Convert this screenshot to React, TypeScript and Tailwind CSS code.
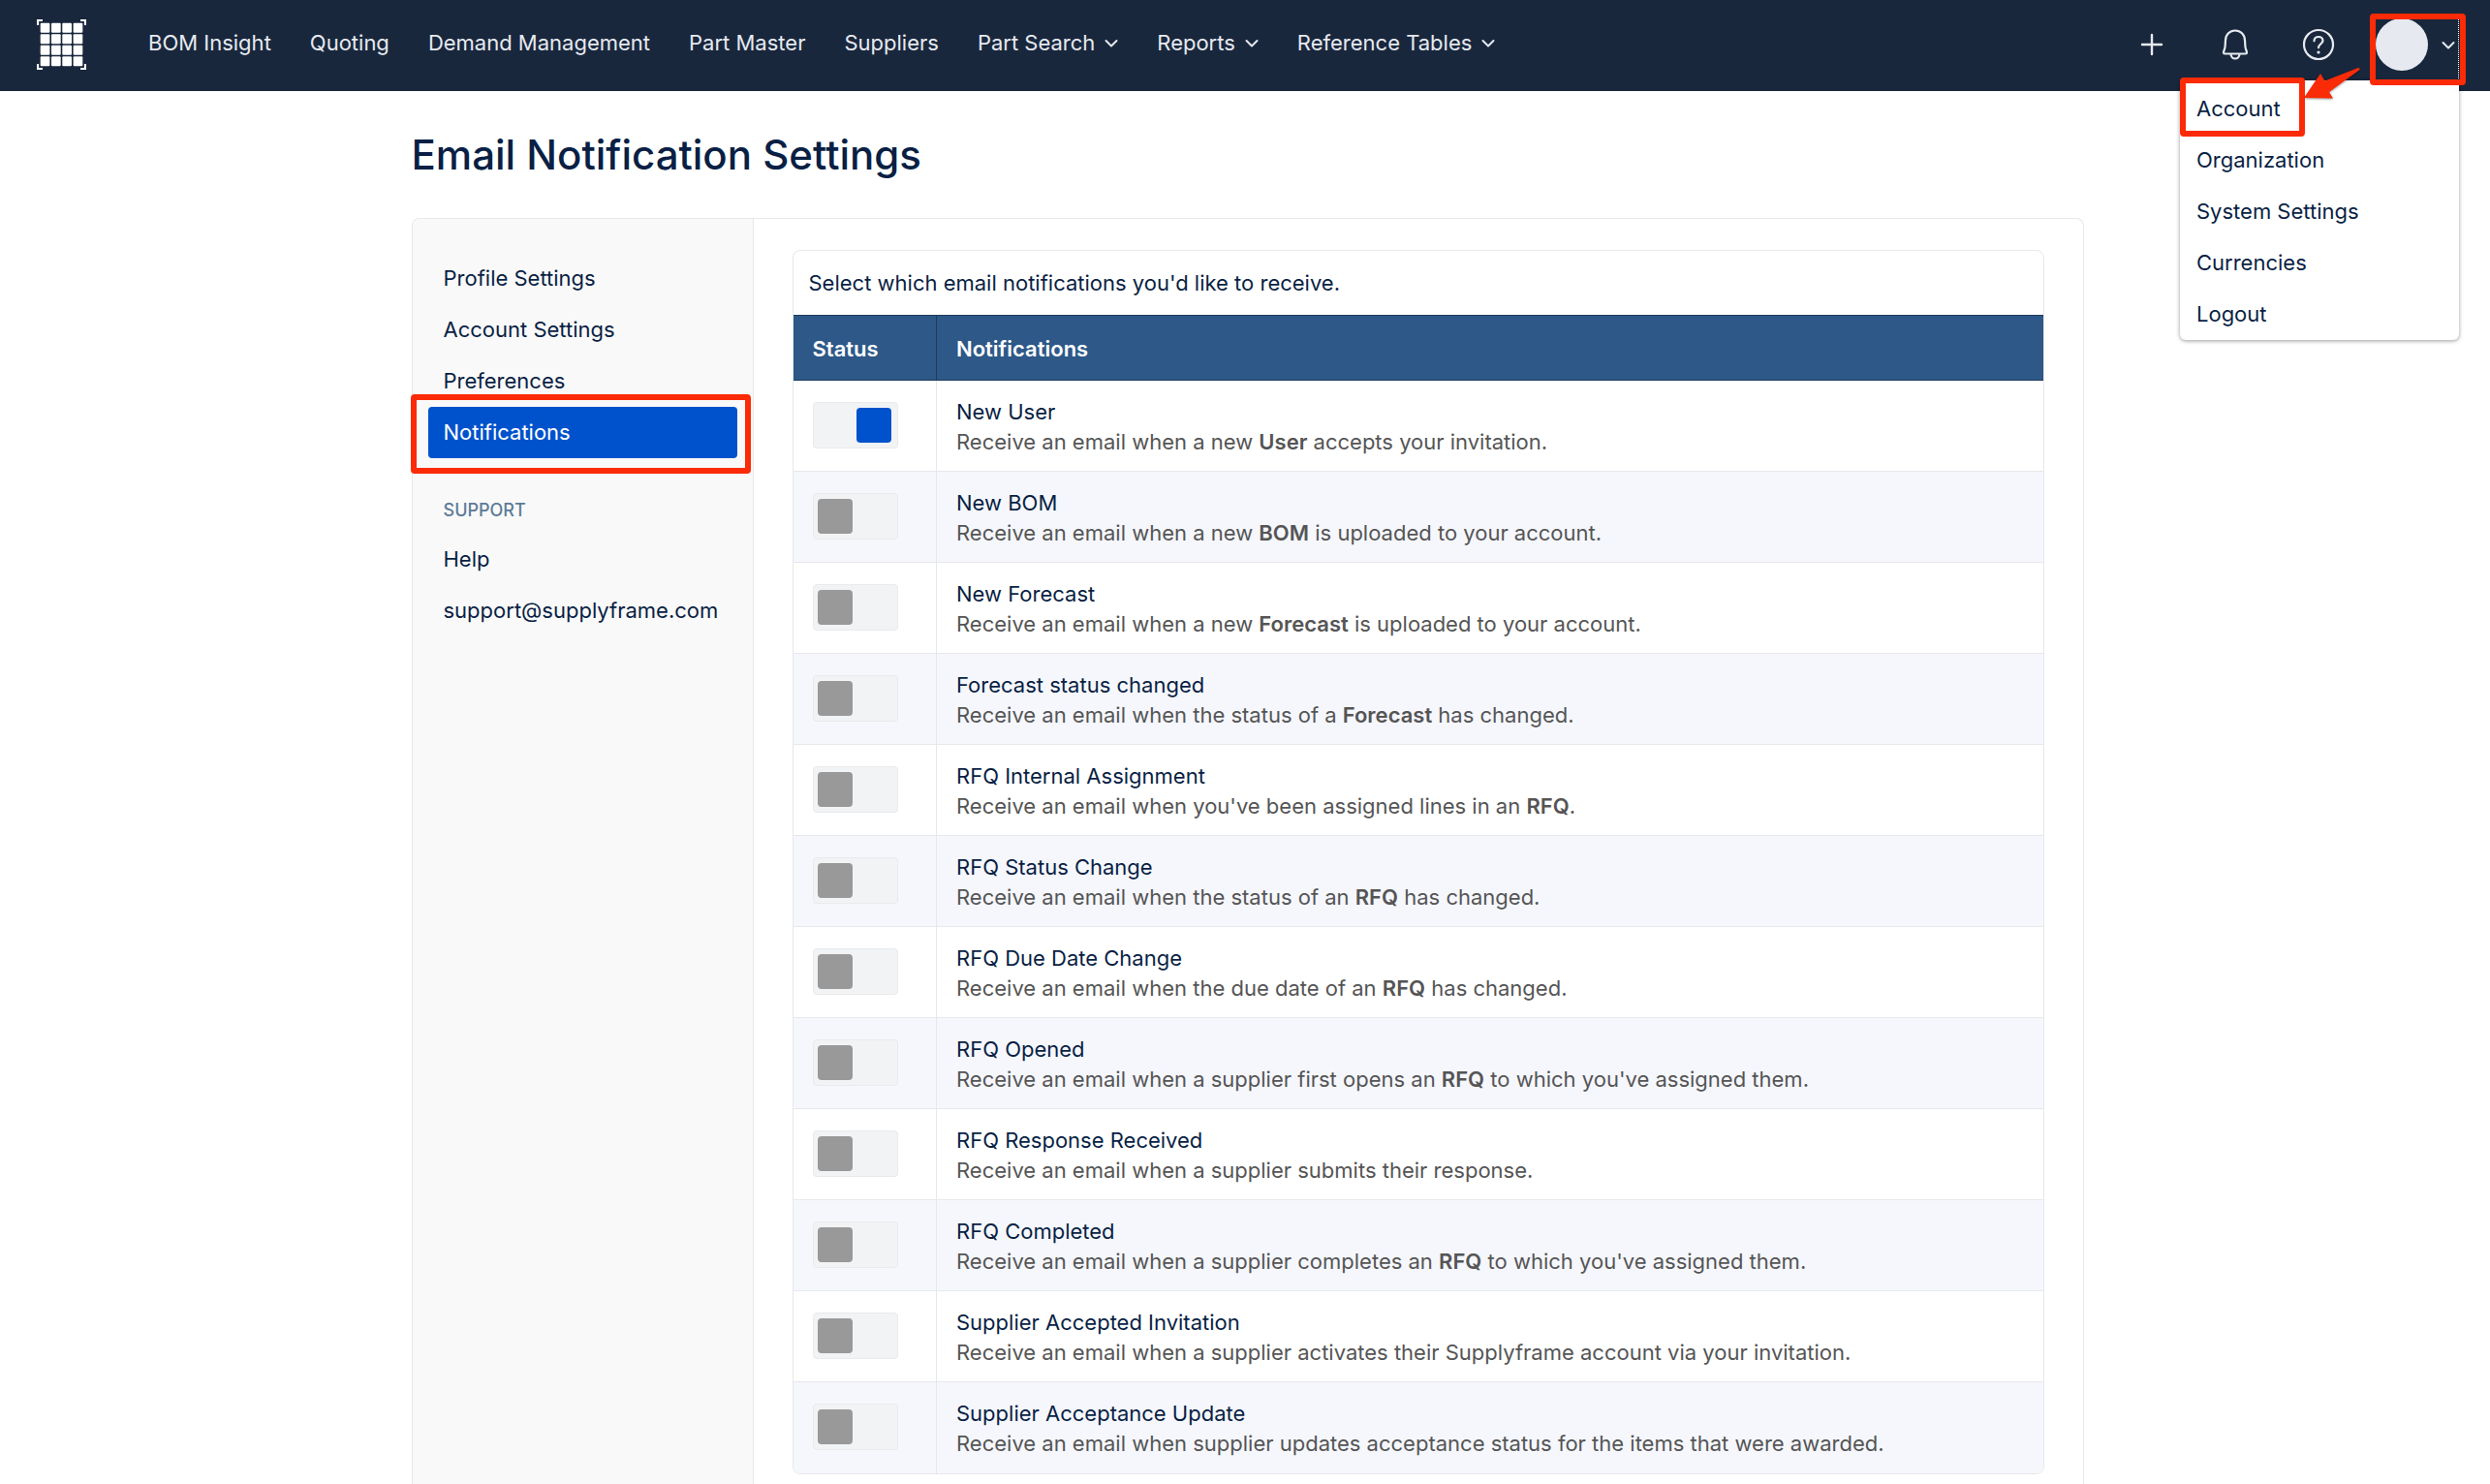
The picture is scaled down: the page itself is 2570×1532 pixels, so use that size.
import { useState } from 'react'
import type { ReactNode } from 'react'
import { clsx } from 'clsx'

const NAV_ITEMS = [
  { label: 'BOM Insight' },
  { label: 'Quoting' },
  { label: 'Demand Management' },
  { label: 'Part Master' },
  { label: 'Suppliers' },
  { label: 'Part Search', menu: true },
  { label: 'Reports', menu: true },
  { label: 'Reference Tables', menu: true },
]

const ACCOUNT_MENU = ['Account', 'Organization', 'System Settings', 'Currencies', 'Logout']

const SETTINGS_LINKS = ['Profile Settings', 'Account Settings', 'Preferences', 'Notifications']

const SUPPORT_LINKS = [
  { label: 'Help', href: '#help' },
  { label: 'support@supplyframe.com', href: 'mailto:support@supplyframe.com' },
]

type Notification = { id: string; title: string; text: ReactNode }

const NOTIFICATIONS: Notification[] = [
  { id: 'new-user', title: 'New User', text: <>Receive an email when a new <b>User</b> accepts your invitation.</> },
  { id: 'new-bom', title: 'New BOM', text: <>Receive an email when a new <b>BOM</b> is uploaded to your account.</> },
  { id: 'new-forecast', title: 'New Forecast', text: <>Receive an email when a new <b>Forecast</b> is uploaded to your account.</> },
  { id: 'forecast-status', title: 'Forecast status changed', text: <>Receive an email when the status of a <b>Forecast</b> has changed.</> },
  { id: 'rfq-assignment', title: 'RFQ Internal Assignment', text: <>Receive an email when you've been assigned lines in an <b>RFQ</b>.</> },
  { id: 'rfq-status', title: 'RFQ Status Change', text: <>Receive an email when the status of an <b>RFQ</b> has changed.</> },
  { id: 'rfq-due-date', title: 'RFQ Due Date Change', text: <>Receive an email when the due date of an <b>RFQ</b> has changed.</> },
  { id: 'rfq-opened', title: 'RFQ Opened', text: <>Receive an email when a supplier first opens an <b>RFQ</b> to which you've assigned them.</> },
  { id: 'rfq-response', title: 'RFQ Response Received', text: <>Receive an email when a supplier submits their response.</> },
  { id: 'rfq-completed', title: 'RFQ Completed', text: <>Receive an email when a supplier completes an <b>RFQ</b> to which you've assigned them.</> },
  { id: 'supplier-accepted', title: 'Supplier Accepted Invitation', text: <>Receive an email when a supplier activates their Supplyframe account via your invitation.</> },
  { id: 'supplier-update', title: 'Supplier Acceptance Update', text: <>Receive an email when supplier updates acceptance status for the items that were awarded.</> },
]

function Logo() {
  const cells = [0, 1, 2, 3]
  return (
    <svg width="51" height="52" viewBox="0 0 51 52" fill="none">
      <path d="M1 6V1H6M45 1h5V6M50 46v5H45M6 51H1V46" stroke="#fff" strokeWidth="2.2" />
      {cells.map((row) =>
        cells.map((col) => (
          <rect key={`${row}-${col}`} x={3.7 + col * 11.3} y={3.8 + row * 11.5} width="9.7" height="9.9" rx="1" fill="#fff" />
        )),
      )}
    </svg>
  )
}

function Chevron() {
  return (
    <svg width="14" height="14" viewBox="0 0 14 14" fill="none" stroke="currentColor" strokeWidth="2" strokeLinecap="round" strokeLinejoin="round">
      <path d="M1.500 5L7 10.500L12.500 5" />
    </svg>
  )
}

function Frame({ className }: { className: string }) {
  return <span className={clsx('absolute pointer-events-none border-6 border-[#fb2b07] rounded-sm', className)} />
}

function TopBar() {
  return (
    <header className="relative z-10 h-[94px] bg-[#19273d] text-[#e6eaf0] pl-[38px] pr-8 pb-0.5 flex items-center justify-between">
      <div className="flex items-center gap-16">
        <a href="#home" aria-label="Home">
          <Logo />
        </a>
        <nav className="flex items-center gap-10 pb-1">
          {NAV_ITEMS.map((item) =>
            item.menu ? (
              <button key={item.label} className="flex items-center gap-2.5 whitespace-nowrap">
                {item.label}
                <Chevron />
              </button>
            ) : (
              <a key={item.label} href="#nav" className="whitespace-nowrap">
                {item.label}
              </a>
            ),
          )}
        </nav>
      </div>

      <div className="flex items-center">
        <button aria-label="Add" className="w-[86px] flex justify-center">
          <svg width="24" height="24" viewBox="0 0 24 24" fill="none" stroke="currentColor" strokeWidth="2.4" strokeLinecap="round">
            <path d="M12 2v20M2 12h20" />
          </svg>
        </button>
        <button aria-label="Alerts" className="w-[86px] flex justify-center">
          <svg width="28" height="34" viewBox="0 0 28 34" fill="none" stroke="currentColor" strokeWidth="2.2" strokeLinecap="round" strokeLinejoin="round">
            <path d="M14 2.5C8.5 2.5 4.2 6.7 4 12.500L3.600 19C3.400 21.500 2 23.500 2 25.200C2 26 2.500 26.500 3.300 26.500H24.700C25.500 26.500 26 26 26 25.200C26 23.500 24.600 21.500 24.400 19L24 12.500C23.800 6.700 19.500 2.500 14 2.500Z" />
            <path d="M9.500 27C9.800 29.700 11.500 31.500 14 31.500S18.200 29.700 18.500 27" />
          </svg>
        </button>
        <button aria-label="Help" className="w-[86px] flex justify-center">
          <svg width="34" height="34" viewBox="0 0 34 34" fill="none" stroke="currentColor" strokeWidth="2.2" strokeLinecap="round" strokeLinejoin="round">
            <circle cx="17" cy="17" r="15" />
            <path d="M12.500 13.300C12.500 10.700 14.500 9 17 9C19.600 9 21.500 10.700 21.500 13.100C21.500 16.200 17 16.400 17 20.200" />
            <circle cx="17" cy="25" r="1.600" fill="currentColor" stroke="none" />
          </svg>
        </button>
        <button aria-label="Account menu" className="relative z-10 ml-4 h-[54px] flex items-center gap-3.5 pr-1">
          <span className="size-[54px] rounded-full bg-[#e6eaf0]" />
          <Chevron />
          <span className="absolute right-0 -top-1 -bottom-2 border-r border-dotted border-white" />
          <Frame className="-left-[6px] -right-[7px] -top-[5px] -bottom-[15px]" />
        </button>
      </div>

      <ul className="absolute right-8 top-[83px] w-72 bg-white text-[#0a1f44] rounded-b-md shadow-[0_1px_4px_rgba(0,0,0,0.4)] pt-[3px]">
        {ACCOUNT_MENU.map((label) => (
          <li key={label}>
            <a href="#account" className="block h-[53px] leading-[53px] px-[17px]">
              {label}
            </a>
          </li>
        ))}
        <li aria-hidden="true">
          <Frame className="left-0 -top-[3px] w-[129px] h-[61px]" />
          <svg className="absolute left-32 -top-[14px] drop-shadow-[0_1px_1px_rgba(0,0,0,0.4)]" width="60" height="36" viewBox="0 0 60 36" fill="#fb2b07">
            <path d="M0 32L17 7L21.500 14.500L56 1Q58 1 57.500 3L26 26L30 32.500Z" />
          </svg>
        </li>
      </ul>
    </header>
  )
}

function Sidebar() {
  return (
    <aside className="w-[352px] shrink-0 bg-[#f9f9f9] border-r border-[#e7e8ea] rounded-tl-lg px-4 pt-[35px]">
      <ul>
        {SETTINGS_LINKS.map((label) => {
          const active = label === 'Notifications'
          return (
            <li key={label} className="relative">
              <a
                href="#settings"
                className={clsx('block h-[53px] leading-[53px] px-4 rounded-sm', active && 'bg-[#0052cc] text-white')}
              >
                {label}
              </a>
              {active && <Frame className="-left-[18px] -right-[14px] -top-[13px] -bottom-4" />}
            </li>
          )
        })}
      </ul>
      <h2 className="mt-10 px-4 text-lg leading-7 font-medium text-[#5d7b98]">SUPPORT</h2>
      <ul className="mt-2.5">
        {SUPPORT_LINKS.map((link) => (
          <li key={link.label}>
            <a href={link.href} className="block h-[53px] leading-[53px] px-4">
              {link.label}
            </a>
          </li>
        ))}
      </ul>
    </aside>
  )
}

function NotificationTable() {
  const [enabled, setEnabled] = useState<Record<string, boolean>>({ 'new-user': true })

  return (
    <section className="border border-[#e7e8ea] rounded-lg overflow-hidden">
      <p className="h-[66px] leading-[66px] px-4">Select which email notifications you'd like to receive.</p>
      <table className="w-full text-left border-collapse">
        <thead>
          <tr className="h-[67px] bg-[#2d5888] text-white border-y border-[#203b5c]">
            <th className="w-[148px] px-5 pt-0.5 font-semibold border-r border-[#203b5c]">Status</th>
            <th className="px-5 pt-0.5 font-semibold">Notifications</th>
          </tr>
        </thead>
        <tbody>
          {NOTIFICATIONS.map((item) => (
            <tr key={item.id} className="h-[94px] even:bg-[#f5f7fd] border-b border-[#e6e8ec] last:border-b-0">
              <td className="px-5 pb-0.5 border-r border-[#e6e8ec]">
                <input
                  id={item.id}
                  type="checkbox"
                  checked={!!enabled[item.id]}
                  onChange={(e) => setEnabled({ ...enabled, [item.id]: e.target.checked })}
                  className="appearance-none flex items-center w-[88px] h-12 pl-1 pr-[6px] rounded-sm border border-[#e8eaec] bg-[#f2f3f5] before:size-9 before:rounded-sm before:bg-[#999] checked:justify-end checked:before:bg-[#0052cc]"
                />
              </td>
              <td className="px-5 pt-0.5">
                <label htmlFor={item.id} className="block leading-[31px]">
                  {item.title}
                </label>
                <p className="leading-[31px] text-[#555] [&_b]:font-semibold">{item.text}</p>
              </td>
            </tr>
          ))}
        </tbody>
      </table>
    </section>
  )
}

export default function App() {
  return (
    <div className="min-h-screen bg-white font-['Inter',sans-serif] text-[22px] text-[#0a1f44]">
      <TopBar />
      <main className="pl-[5px]">
        <div className="mx-auto max-w-[1726px]">
          <h1 className="pt-9 pb-[35px] text-[42px] leading-[60px] font-medium">Email Notification Settings</h1>
          <div className="flex border border-b-0 border-[#e7e8ea] rounded-t-lg">
            <Sidebar />
            <div className="grow pl-10 pr-10 pt-8 pb-10">
              <NotificationTable />
            </div>
          </div>
        </div>
      </main>
    </div>
  )
}
